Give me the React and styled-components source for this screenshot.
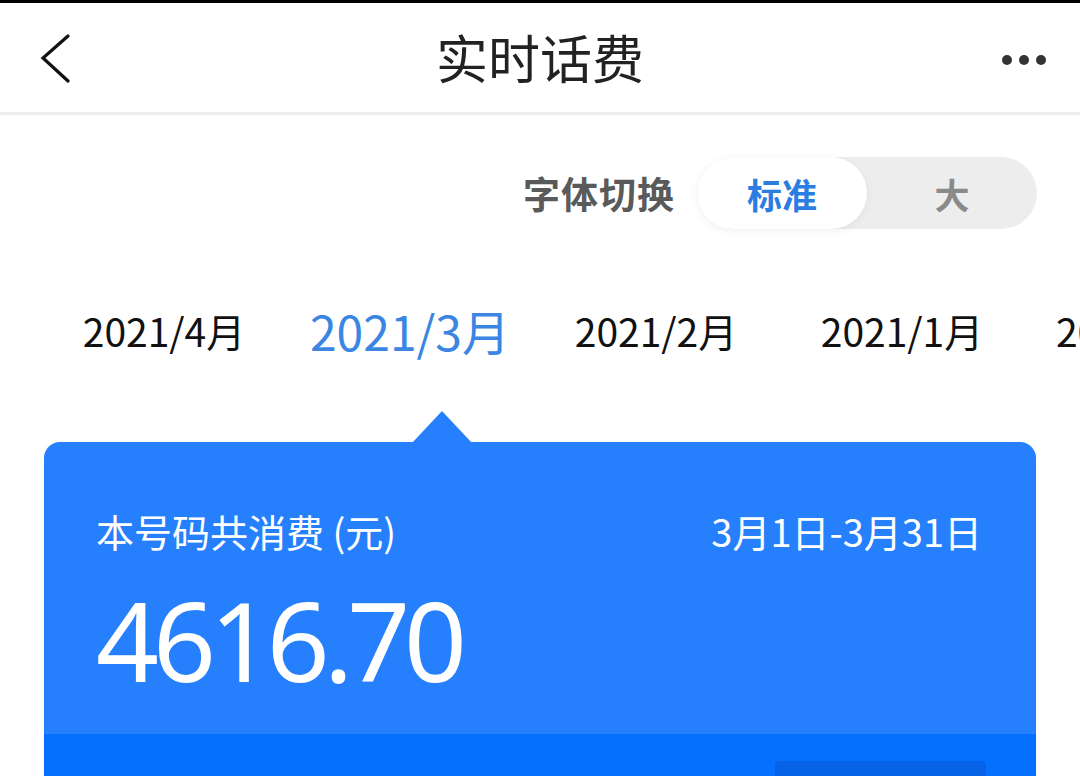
import React from 'react';
import styled, { createGlobalStyle } from 'styled-components';

const GlobalStyle = createGlobalStyle`
  html, body {
    margin: 0;
    padding: 0;
    background: #ffffff;
  }
  body {
    font-family: "Noto Sans CJK SC", "Noto Sans", sans-serif;
    overflow: hidden;
  }
`;

const Page = styled.div`
  width: 1080px;
  height: 776px;
  overflow: hidden;
  background: #ffffff;
`;

const StatusStrip = styled.div`
  height: 3px;
  background: #000;
`;

const Header = styled.header`
  height: 109px;
  display: grid;
  grid-template-columns: 120px 1fr 120px;
  align-items: center;
  border-bottom: 3px solid #ececec;
`;

const BackButton = styled.div`
  display: flex;
  align-items: center;
  padding-left: 38px;
  padding-top: 2px;
`;

const Title = styled.h1`
  margin: 0;
  text-align: center;
  font-size: 52px;
  font-weight: 400;
  color: #222;
  line-height: 1;
  padding-bottom: 2px;
`;

const MoreButton = styled.div`
  display: flex;
  justify-content: flex-end;
  padding-right: 34px;
  gap: 7px;
  padding-top: 4px;
`;

const Dot = styled.span`
  width: 10px;
  height: 10px;
  border-radius: 50%;
  background: #333;
`;

const SwitchRow = styled.div`
  display: flex;
  justify-content: flex-end;
  align-items: center;
  gap: 22px;
  padding: 42px 43px 0 0;
`;

const SwitchLabel = styled.span`
  font-size: 37px;
  font-weight: 700;
  color: #5a5a5a;
  letter-spacing: 1px;
`;

const Toggle = styled.div`
  display: flex;
  width: 340px;
  height: 72px;
  border-radius: 36px;
  background: #ededed;
`;

const ToggleOption = styled.div`
  flex: 0 0 170px;
  display: flex;
  align-items: center;
  justify-content: center;
  border-radius: 36px;
  font-size: 35px;
  font-weight: 700;
  color: ${p => (p.$active ? '#2b7de1' : '#8a8a8a')};
  background: ${p => (p.$active ? '#ffffff' : 'transparent')};
  box-shadow: ${p => (p.$active ? '0 2px 8px rgba(0,0,0,0.06)' : 'none')};
`;

const Tabs = styled.div`
  display: flex;
  padding-left: 41px;
  margin-top: 70px;
  height: 62px;
  align-items: center;
  white-space: nowrap;
`;

const Tab = styled.div`
  flex: 0 0 246px;
  text-align: center;
  font-size: ${p => (p.$active ? '48px' : '39px')};
  color: ${p => (p.$active ? '#3a86e2' : '#111')};
  line-height: 1;
`;

const CardWrap = styled.div`
  position: relative;
  margin: 81px 44px 0;
`;

const Pointer = styled.div`
  position: absolute;
  left: 368px;
  top: -31px;
  width: 0;
  height: 0;
  border-left: 30px solid transparent;
  border-right: 30px solid transparent;
  border-bottom: 32px solid #2680fe;
`;

const Card = styled.div`
  border-radius: 16px 16px 0 0;
  overflow: hidden;
  background: #2680fe;
  box-shadow: 0 0 6px rgba(0, 0, 0, 0.04);
  color: #fff;
`;

const CardTop = styled.div`
  height: 292px;
  padding: 68px 54px 0 52px;
  box-sizing: border-box;
`;

const InfoRow = styled.div`
  display: flex;
  justify-content: space-between;
  align-items: center;
  font-size: 38px;
  line-height: 1.1;
`;

const Amount = styled.div`
  margin-top: 32px;
  font-family: "Noto Sans", sans-serif;
  font-size: 110px;
  line-height: 1;
  letter-spacing: -6px;
`;

const CardBottom = styled.div`
  height: 80px;
  background: #0670fe;
  display: flex;
  align-items: flex-start;
  padding-top: 27px;
  box-sizing: border-box;
`;

const BottomText = styled.span`
  margin-left: 291px;
  font-size: 36px;
  line-height: 1;
  padding-top: 14px;
`;

const BottomChip = styled.div`
  margin-left: auto;
  margin-right: 50px;
  width: 211px;
  height: 60px;
  border-radius: 4px;
  background: #0663e8;
  display: flex;
  justify-content: center;
  padding-top: 14px;
  box-sizing: border-box;
  font-size: 36px;
  line-height: 1;
`;

const ChevronLeft = () => (
  <svg width="34" height="50" viewBox="0 0 34 50">
    <polyline points="30,2 5,24 30,47" fill="none" stroke="#111" strokeWidth="3.2" strokeLinecap="round" strokeLinejoin="miter" />
  </svg>
);

const months = ['2021/4月', '2021/3月', '2021/2月', '2021/1月', '2020/12月'];

export default function App() {
  return (
    <Page>
      <GlobalStyle />
      <StatusStrip />
      <Header>
        <BackButton>
          <ChevronLeft />
        </BackButton>
        <Title>实时话费</Title>
        <MoreButton>
          <Dot />
          <Dot />
          <Dot />
        </MoreButton>
      </Header>

      <SwitchRow>
        <SwitchLabel>字体切换</SwitchLabel>
        <Toggle>
          <ToggleOption $active>标准</ToggleOption>
          <ToggleOption>大</ToggleOption>
        </Toggle>
      </SwitchRow>

      <Tabs>
        {months.map(m => (
          <Tab key={m} $active={m === '2021/3月'}>{m}</Tab>
        ))}
      </Tabs>

      <CardWrap>
        <Pointer />
        <Card>
          <CardTop>
            <InfoRow>
              <span>本号码共消费 (元)</span>
              <span>3月1日-3月31日</span>
            </InfoRow>
            <Amount>4616.70</Amount>
          </CardTop>
          <CardBottom>
            <BottomText>套餐内</BottomText>
            <BottomChip>查看详单</BottomChip>
          </CardBottom>
        </Card>
      </CardWrap>
    </Page>
  );
}
